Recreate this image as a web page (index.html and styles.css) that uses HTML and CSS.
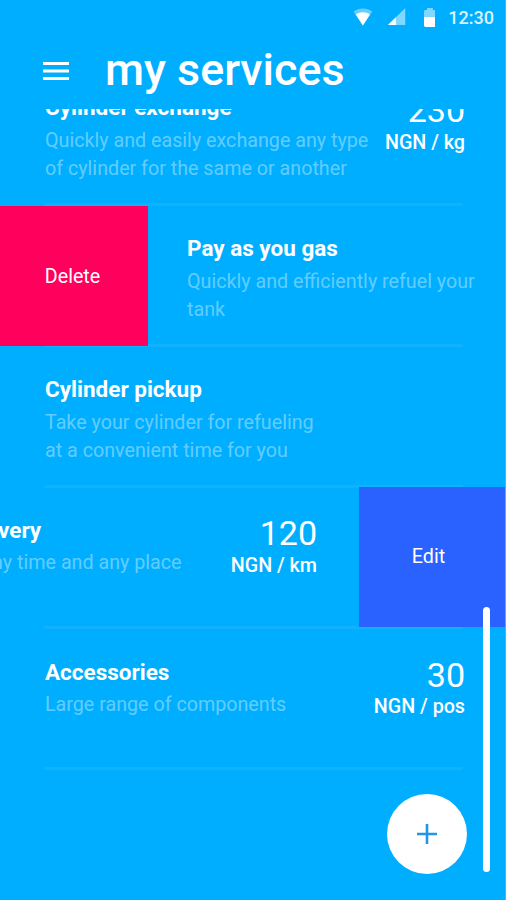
FILE: index.html
```html
<!DOCTYPE html>
<html lang="en">
<head>
  <meta charset="UTF-8" />
  <title>my services</title>
  <link rel="stylesheet" href="styles.css">
</head>
<body>
  <div class="screen">
    <div class="status">
      <svg class="wifi" width="20" height="18" viewBox="0 0 20 18">
        <path d="M0.5 3.5C6 -.6 14 -.6 19.500 3.500L10 17.500Z" fill="#fff" opacity=".4"/>
        <path d="M2.800 6.500C7 3.500 13 3.500 17.200 6.500L10 17.500Z" fill="#fff"/>
      </svg>
      <svg class="signal" width="18" height="18" viewBox="0 0 18 18">
        <path d="M17.500 0V17H0Z" fill="#fff" opacity=".5"/>
        <path d="M8 9.300V17H0Z" fill="#fff"/>
      </svg>
      <svg class="battery" width="12" height="19" viewBox="0 0 12 19">
        <path d="M0 9V3.500Q0 2 1.500 2H3V0H9V2H10.500Q12 2 12 3.500V9Z" fill="#fff" opacity=".5"/>
        <path d="M0 9H12V17.500Q12 19 10.500 19H1.500Q0 19 0 17.500Z" fill="#fff"/>
      </svg>
      <span class="time">12:30</span>
    </div>
    <header class="header">
      <svg class="menu" width="26" height="20" viewBox="0 0 26 20">
        <path d="M0 2.500H26M0 10H26M0 17.500H26" stroke="#fff" stroke-width="2.800"/>
      </svg>
      <h1>my services</h1>
    </header>

    <main class="list">
      <div class="row first">
        <div class="info">
          <h2>Cylinder exchange</h2>
          <p>Quickly and easily exchange any type<br>of cylinder for the same or another</p>
        </div>
        <div class="price"><b>230</b><span>NGN / kg</span></div>
      </div>
      <div class="row swiped-right">
        <button class="action delete">Delete</button>
        <div class="info">
          <h2>Pay as you gas</h2>
          <p>Quickly and efficiently refuel your<br>tank</p>
        </div>
      </div>
      <div class="row">
        <div class="info">
          <h2>Cylinder pickup</h2>
          <p>Take your cylinder for refueling<br>at a convenient time for you</p>
        </div>
      </div>
      <div class="row swiped-left">
        <div class="info">
          <h2>very</h2>
          <p>ny time and any place</p>
        </div>
        <div class="price"><b>120</b><span>NGN / km</span></div>
        <button class="action edit">Edit</button>
      </div>
      <div class="row last">
        <div class="info">
          <h2>Accessories</h2>
          <p>Large range of components</p>
        </div>
        <div class="price"><b>30</b><span>NGN / pos</span></div>
      </div>
    </main>

    <button class="add">
      <svg width="20" height="20" viewBox="0 0 20 20">
        <path d="M10 0V20M0 10H20" stroke="#2196e8" stroke-width="2.600"/>
      </svg>
    </button>
    <div class="scrollbar"></div>
  </div>
</body>
</html>
```
FILE: styles.css
```css
* { box-sizing: border-box; }
body { margin: 0; font-family: Roboto, sans-serif; background: #00aeff; color: #fff; }
h1, h2, p { margin: 0; white-space: nowrap; }
button { padding: 0; border: none; font-family: inherit; color: #fff; cursor: pointer; }

.screen { position: relative; width: 506px; height: 900px; overflow: hidden; background: #00aeff; border-right: 1px solid #35bdff; }

.status { display: flex; height: 36px; padding: 0 11px 2px 353px; align-items: center; }
.signal { margin-left: 15px; }
.battery { margin-left: 18px; }
.time { margin-left: 13px; padding-top: 1px; font-size: 18px; font-weight: 500; opacity: .85; white-space: nowrap; }

.header { display: flex; align-items: center; height: 73px; padding: 0 0 5px 43px; }
.menu { margin-top: 1px; }
h1 { margin-left: 36px; font-size: 44.8px; line-height: 52px; font-weight: 500; }

.list { height: 791px; overflow: hidden; }
.row { position: relative; display: flex; height: 141px; padding: 29px 40px 0 45px; }
.row::after { content: ""; position: absolute; left: 44px; right: 42px; bottom: 0; height: 3px; background: #12b1ff; }
.first { margin-top: -44px; }
.info { flex: 1; min-width: 0; }
h2 { font-size: 22.5px; line-height: 26px; font-weight: 700; }
p { margin-top: 7px; font-size: 19.7px; line-height: 28px; color: rgba(255,255,255,.4); }
.price { flex: none; text-align: right; }
.price b { display: block; font-size: 34px; line-height: 34px; font-weight: 400; }
.price span { display: block; padding-top: 1px; font-size: 19.7px; line-height: 28px; font-weight: 500; }
.first .price, .swiped-left .price { margin-top: -1px; }
.first .price span, .swiped-left .price span { padding-top: 2px; }
.last h2 { line-height: 28px; }
.last p { margin-top: 5px; }

.action { position: relative; z-index: 1; flex: none; height: 140px; font-size: 19.7px; }
.delete { width: 148px; padding-right: 3px; background: #ff005c; }
.edit { width: 146px; padding: 0 7px 2px 0; background: #2962ff; margin: -30px 0 0 42px; }
.swiped-right { padding: 0; }
.swiped-right .info { padding: 29px 0 0 39px; }
.swiped-left { padding-left: 0; padding-right: 0; }
.swiped-left h2 { margin-left: -2px; }
.swiped-left p { margin: 6px 0 0 -8px; }

.add { position: absolute; left: 387px; top: 794px; display: flex; align-items: center; justify-content: center; width: 80px; height: 80px; border-radius: 50%; background: #fff; }
.scrollbar { position: absolute; z-index: 2; left: 483px; top: 607px; width: 7px; height: 265px; border-radius: 4px; background: #fff; }
```
